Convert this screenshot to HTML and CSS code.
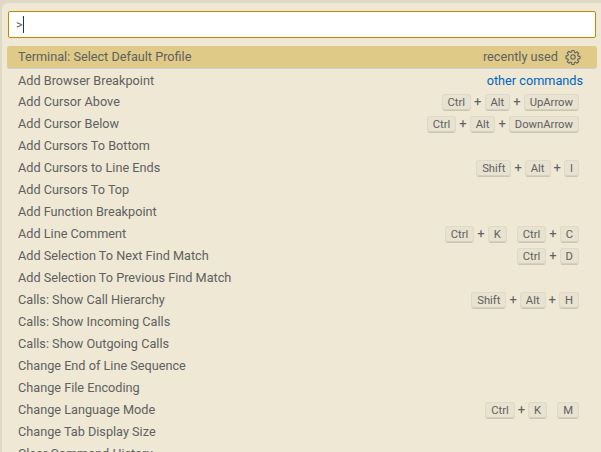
FILE: index.html
```html
<!DOCTYPE html>
<html lang="en">
<head>
  <meta charset="UTF-8" />
  <title>Command Palette</title>
  <link rel="stylesheet" href="styles.css">
</head>
<body>
  <div class="palette">
    <div class="input-box">&gt;<span class="caret"></span></div>

    <div class="list">
      <div class="row selected">
        <span class="label">Terminal: Select Default Profile</span>
        <span class="recent">recently used</span>
        <svg class="gear" width="16" height="16" viewBox="0 0 16 16" fill="none" stroke="currentColor" stroke-width="1.1" stroke-linejoin="round">
          <circle cx="8" cy="8" r="2.2"/>
          <path d="M6.9 1.5h2.2l.3 1.9 1.1.5 1.6-1.1 1.6 1.6-1.1 1.6.5 1.1 1.9.3v2.2l-1.9.3-.5 1.1 1.1 1.6-1.6 1.6-1.6-1.1-1.1.5-.3 1.9H6.9l-.3-1.9-1.1-.5-1.6 1.1-1.6-1.6 1.1-1.6-.5-1.1-1.9-.3V6.9l1.9-.3.5-1.1-1.1-1.6 1.6-1.6 1.6 1.1 1.1-.5z"/>
        </svg>
      </div>
      <div class="row other-row">
        <span class="label">Add Browser Breakpoint</span>
        <span class="other">other commands</span>
      </div>
      <div class="row">
        <span class="label">Add Cursor Above</span>
        <span class="keys"><kbd>Ctrl</kbd>+<kbd>Alt</kbd>+<kbd>UpArrow</kbd></span>
      </div>
      <div class="row">
        <span class="label">Add Cursor Below</span>
        <span class="keys"><kbd>Ctrl</kbd>+<kbd>Alt</kbd>+<kbd>DownArrow</kbd></span>
      </div>
      <div class="row"><span class="label">Add Cursors To Bottom</span></div>
      <div class="row">
        <span class="label">Add Cursors to Line Ends</span>
        <span class="keys"><kbd>Shift</kbd>+<kbd>Alt</kbd>+<kbd>I</kbd></span>
      </div>
      <div class="row"><span class="label">Add Cursors To Top</span></div>
      <div class="row"><span class="label">Add Function Breakpoint</span></div>
      <div class="row">
        <span class="label">Add Line Comment</span>
        <span class="keys"><kbd>Ctrl</kbd>+<kbd>K</kbd><span class="chord"></span><kbd>Ctrl</kbd>+<kbd>C</kbd></span>
      </div>
      <div class="row">
        <span class="label">Add Selection To Next Find Match</span>
        <span class="keys"><kbd>Ctrl</kbd>+<kbd>D</kbd></span>
      </div>
      <div class="row"><span class="label">Add Selection To Previous Find Match</span></div>
      <div class="row">
        <span class="label">Calls: Show Call Hierarchy</span>
        <span class="keys"><kbd>Shift</kbd>+<kbd>Alt</kbd>+<kbd>H</kbd></span>
      </div>
      <div class="row"><span class="label">Calls: Show Incoming Calls</span></div>
      <div class="row"><span class="label">Calls: Show Outgoing Calls</span></div>
      <div class="row"><span class="label">Change End of Line Sequence</span></div>
      <div class="row"><span class="label">Change File Encoding</span></div>
      <div class="row">
        <span class="label">Change Language Mode</span>
        <span class="keys"><kbd>Ctrl</kbd>+<kbd>K</kbd><span class="chord"></span><kbd>M</kbd></span>
      </div>
      <div class="row"><span class="label">Change Tab Display Size</span></div>
      <div class="row"><span class="label">Clear Command History</span></div>
    </div>
  </div>
</body>
</html>
```
FILE: styles.css
```css
html, body {
  height: 100%;
}

body {
  margin: 0;
  background-color: #e0d9c6;
  font-family: Roboto, "Open Sans", sans-serif;
  font-size: 12.7px;
  color: #616161;
  overflow: hidden;
}

.palette {
  margin: 3px 0 0 2px;
  height: 449px;
  background-color: #eee8d5;
  border-radius: 6px 0 0 0;
  padding: 8px 4px 0 5px;
  overflow: hidden;
}

.input-box {
  height: 25px;
  margin: 0 1px;
  padding-left: 7px;
  background-color: white;
  border: 1px solid #b58900;
  border-radius: 2px;
  display: flex;
  align-items: center;
}

.caret {
  width: 1px;
  height: 17px;
  background-color: #333;
}

.list {
  margin-top: 8px;
}

.row {
  height: 22px;
  line-height: 22px;
  padding: 0 18px 0 11px;
  display: flex;
  justify-content: space-between;
  align-items: center;
  white-space: nowrap;
}

.selected {
  height: 23px;
  padding-right: 16px;
  background-color: #dfca88;
  border-radius: 3px;
  border-bottom: 1px solid #cfd0dc;
  box-sizing: border-box;
}

.selected .label {
  flex: 1;
}

.recent {
  margin-right: 7px;
}

.gear {
  display: block;
}

.other-row {
  padding-right: 14px;
}

.other-row .label {
  padding-top: 1px;
}

.other {
  color: #0066bf;
  padding-top: 1px;
}

.keys {
  display: flex;
  align-items: center;
  gap: 3px;
  font-size: 13px;
}

.chord {
  width: 4px;
}

kbd {
  font-family: inherit;
  font-size: 11.25px;
  line-height: 13px;
  padding: 1px 5px;
  background-color: #e8e2d0;
  border: 1px solid #dfd9c7;
  border-bottom-color: #cbc6b4;
  border-radius: 3px;
  box-shadow: inset 0 -1px 0 #d6d1be;
}
```
